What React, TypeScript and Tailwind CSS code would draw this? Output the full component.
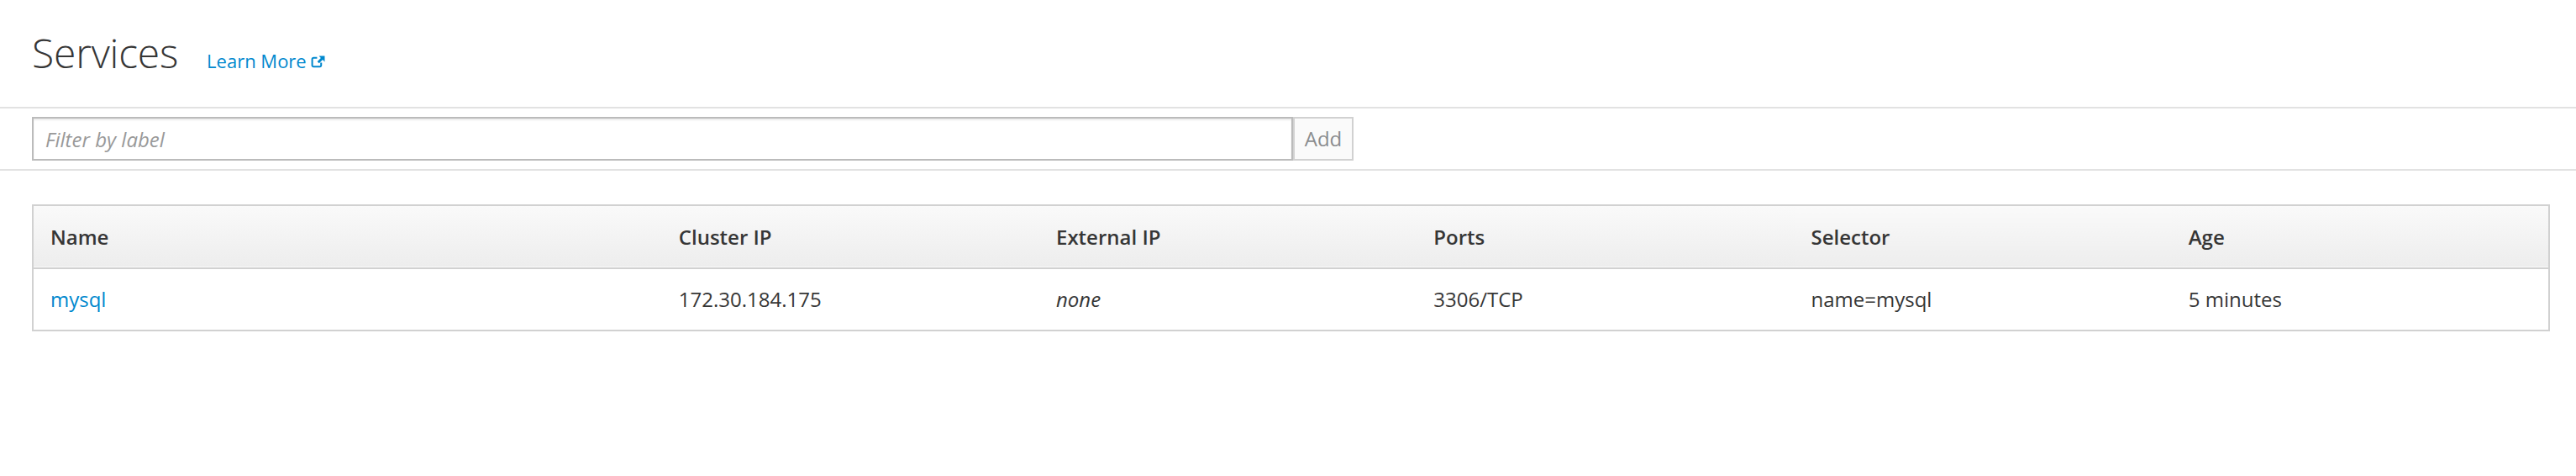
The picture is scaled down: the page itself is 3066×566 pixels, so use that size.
const columns = [
  { label: "Name", width: "w-[25%]" },
  { label: "Cluster IP", width: "w-[15%]" },
  { label: "External IP", width: "w-[15%]" },
  { label: "Ports", width: "w-[15%]" },
  { label: "Selector", width: "w-[15%]" },
  { label: "Age", width: "w-[15%]" },
];

export default function App() {
  return (
    <div className="min-h-[566px] bg-white font-['Open_Sans','Noto_Sans',sans-serif] text-[#363636]">
      <div className="flex items-baseline pl-[38px] pt-[37px] pb-[38px]">
        <h1 className="text-[48px] leading-[52px] font-light tracking-[-0.2px]">
          Services
        </h1>
        <a
          href="#"
          className="ml-[34px] flex items-baseline text-[22px] leading-[32px] text-[#0088ce]"
        >
          Learn More
          <ExternalLinkIcon />
        </a>
      </div>

      <div className="border-y-2 border-[#e2e2e2] pl-[38px] pt-[10px] pb-[10px]">
        <div className="flex h-[52px]">
          <input
            type="text"
            placeholder="Filter by label"
            className="h-full w-[1501px] border-2 border-[#bbbbbb] px-[14px] text-[24px] italic text-[#363636] shadow-[inset_0_2px_2px_rgba(3,3,3,0.08)] outline-none placeholder:text-[#999999]"
          />
          <button
            type="button"
            className="h-full w-[72px] border-2 border-[#d1d1d1] bg-[#fafafa] text-[24px] text-[#8b8d8f]"
          >
            Add
          </button>
        </div>
      </div>

      <div className="pl-[38px] pr-[31px] pt-[40px]">
        <table className="w-full table-fixed border-collapse border-2 border-[#d1d1d1] text-left text-[24px]">
          <thead>
            <tr className="h-[75px] border-b-2 border-[#d1d1d1] bg-gradient-to-b from-[#fafafa] to-[#ededed]">
              {columns.map((column) => (
                <th
                  key={column.label}
                  className={`${column.width} pl-[20px] font-semibold text-[#363636]`}
                >
                  {column.label}
                </th>
              ))}
            </tr>
          </thead>
          <tbody>
            <tr className="h-[74px]">
              <td className="pl-[20px]">
                <a href="#" className="text-[#0088ce]">
                  mysql
                </a>
              </td>
              <td className="pl-[20px]">172.30.184.175</td>
              <td className="pl-[20px] italic">none</td>
              <td className="pl-[20px]">3306/TCP</td>
              <td className="pl-[20px]">name=mysql</td>
              <td className="pl-[20px]">5 minutes</td>
            </tr>
          </tbody>
        </table>
      </div>
    </div>
  );
}

function ExternalLinkIcon() {
  return (
    <svg
      viewBox="0 0 16 14"
      aria-hidden="true"
      className="ml-[5px] h-[15px] w-[17px] self-center translate-y-[1px]"
    >
      <path
        d="M7 2.5H3a1.5 1.5 0 0 0-1.5 1.5v7A1.5 1.5 0 0 0 3 12.5h7a1.5 1.5 0 0 0 1.5-1.5V8"
        fill="none"
        stroke="currentColor"
        strokeWidth="1.9"
      />
      <path d="M9 0.5h6.5V7l-2.3-2.3-4 4-2-2 4-4Z" fill="currentColor" />
    </svg>
  );
}
